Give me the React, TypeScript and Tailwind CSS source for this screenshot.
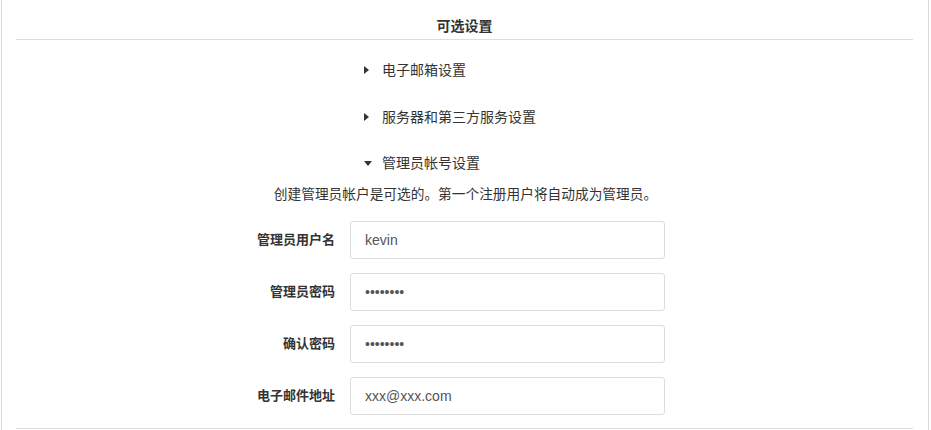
import React from 'react';

const font = { fontFamily: '"Liberation Sans", "Noto Sans CJK SC", sans-serif' };

// 折叠菜单的三角形
function Caret({ open }: { open?: boolean }) {
    return open ? (
        <svg width="8" height="5" viewBox="0 0 8 5" className="shrink-0">
            <path d="M0 0 L8 0 L4 5 Z" fill="#333" />
        </svg>
    ) : (
        <svg width="5" height="8" viewBox="0 0 5 8" className="shrink-0">
            <path d="M0 0 L5 4 L0 8 Z" fill="#333" />
        </svg>
    );
}

const sections = [
    { name: '电子邮箱设置', open: false },
    { name: '服务器和第三方服务设置', open: false },
    { name: '管理员帐号设置', open: true },
];

const fields = [
    { label: '管理员用户名', type: 'text', value: 'kevin' },
    { label: '管理员密码', type: 'password', value: '12345678' },
    { label: '确认密码', type: 'password', value: '12345678' },
    { label: '电子邮件地址', type: 'text', value: 'xxx@xxx.com' },
];

export default function App() {
    return (
        <div style={font} className="ml-[1px] w-[928px] h-[430px] border-x border-[#d9d9d9] bg-white text-[#333] overflow-hidden">
            <div className="pl-[14px] pr-[15px]">
                {/* 标题 */}
                <div className="pt-4 pb-[3px] border-b border-[#dedede] text-center text-[14px] leading-5 font-bold">
                    可选设置
                </div>

                {/* 折叠区块 */}
                <div className="flex flex-col gap-[26.5px] pt-[20px] pl-[348px]">
                    {sections.map((s) => (
                        <div key={s.name} className="flex items-center h-5 text-[14px] leading-5">
                            <div className="w-[18px] flex items-center">
                                <Caret open={s.open} />
                            </div>
                            <span>{s.name}</span>
                        </div>
                    ))}
                </div>

                <p className="mt-[12px] text-center text-[13.7px] leading-5 pl-[2px]">
                    创建管理员帐户是可选的。第一个注册用户将自动成为管理员。
                </p>

                {/* 表单 */}
                <div className="mt-4 flex flex-col gap-[14px] pb-[13px] border-b border-[#dedede]">
                    {fields.map((f) => (
                        <div key={f.label} className="flex items-center">
                            <label className="w-[334px] pr-[15px] text-right text-[13px] font-bold">
                                {f.label}
                            </label>
                            <input
                                type={f.type}
                                defaultValue={f.value}
                                style={font}
                                className="w-[315px] h-[38px] px-[14px] border border-[#dcdcdc] rounded-[3px] text-[14px] text-[#555] outline-none"
                            />
                        </div>
                    ))}
                </div>
            </div>
        </div>
    );
}
